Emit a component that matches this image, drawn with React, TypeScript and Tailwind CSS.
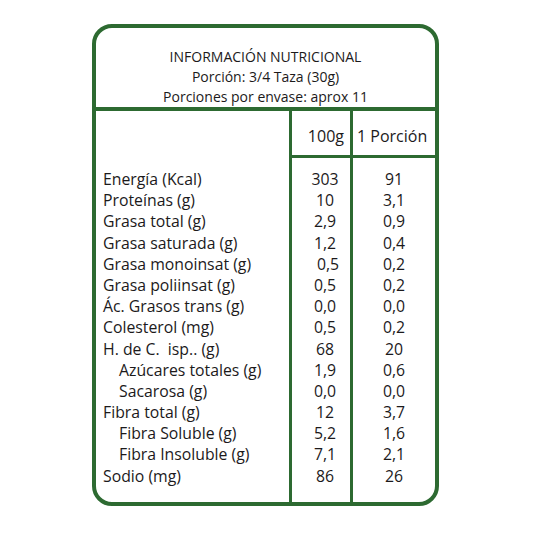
const ROWS: [string, string, string, boolean?][] = [
  ["Energía (Kcal)", "303", "91"],
  ["Proteínas (g)", "10", "3,1"],
  ["Grasa total (g)", "2,9", "0,9"],
  ["Grasa saturada (g)", "1,2", "0,4"],
  ["Grasa monoinsat (g)", "0,5", "0,2"],
  ["Grasa poliinsat (g)", "0,5", "0,2"],
  ["Ác. Grasos trans (g)", "0,0", "0,0"],
  ["Colesterol (mg)", "0,5", "0,2"],
  ["H. de C.  isp.. (g)", "68", "20"],
  ["Azúcares totales (g)", "1,9", "0,6", true],
  ["Sacarosa (g)", "0,0", "0,0", true],
  ["Fibra total (g)", "12", "3,7"],
  ["Fibra Soluble (g)", "5,2", "1,6", true],
  ["Fibra Insoluble (g)", "7,1", "2,1", true],
  ["Sodio (mg)", "86", "26"],
];

export default function App() {
  return (
    <div className="w-[533px] h-[533px] bg-white pt-[24px] pl-[92px] font-['Open_Sans',sans-serif] font-medium text-[#1c1a1b]">
      <div className="w-[347px] h-[482px] border-4 border-[#2d6a31] rounded-[20px] flex flex-col overflow-hidden">
        <div className="h-[83px] border-b-4 border-[#2d6a31] pt-[19px] text-center text-[14px] leading-[20px]">
          <div>INFORMACIÓN NUTRICIONAL</div>
          <div>Porción: 3/4 Taza (30g)</div>
          <div>Porciones por envase: aprox 11</div>
        </div>
        <div className="flex-1 flex text-[15.8px]">
          <div className="w-[193px] pl-[7px]">
            <div className="h-[58px]" />
            {ROWS.map(([label, , , sub]) => (
              <div key={label} className={`h-[21.2px] leading-[21.2px] whitespace-pre ${sub ? "pl-[16px]" : ""}`}>
                {label}
              </div>
            ))}
          </div>
          <div className="w-[61px] border-l-[3px] border-[#2d6a31]">
            <div className="h-[47px] border-b-[3px] border-[#2d6a31] flex items-center justify-end pt-[5px] pr-[6px] text-[16px]">
              100g
            </div>
            <div className="pt-[11px]">
              {ROWS.map(([label, v]) => (
                <div
                  key={label}
                  className={`h-[21.2px] leading-[21.2px] text-center ${label === "Grasa monoinsat (g)" ? "pl-[14px]" : "pl-[8px]"}`}
                >
                  {v}
                </div>
              ))}
            </div>
          </div>
          <div className="flex-1 border-l-[3px] border-[#2d6a31]">
            <div className="h-[47px] border-b-[3px] border-[#2d6a31] flex items-center pt-[5px] pl-[4px] text-[16px]">
              1 Porción
            </div>
            <div className="pt-[11px]">
              {ROWS.map(([label, , v]) => (
                <div key={label} className="h-[21.2px] leading-[21.2px] text-center">
                  {v}
                </div>
              ))}
            </div>
          </div>
        </div>
      </div>
    </div>
  );
}
